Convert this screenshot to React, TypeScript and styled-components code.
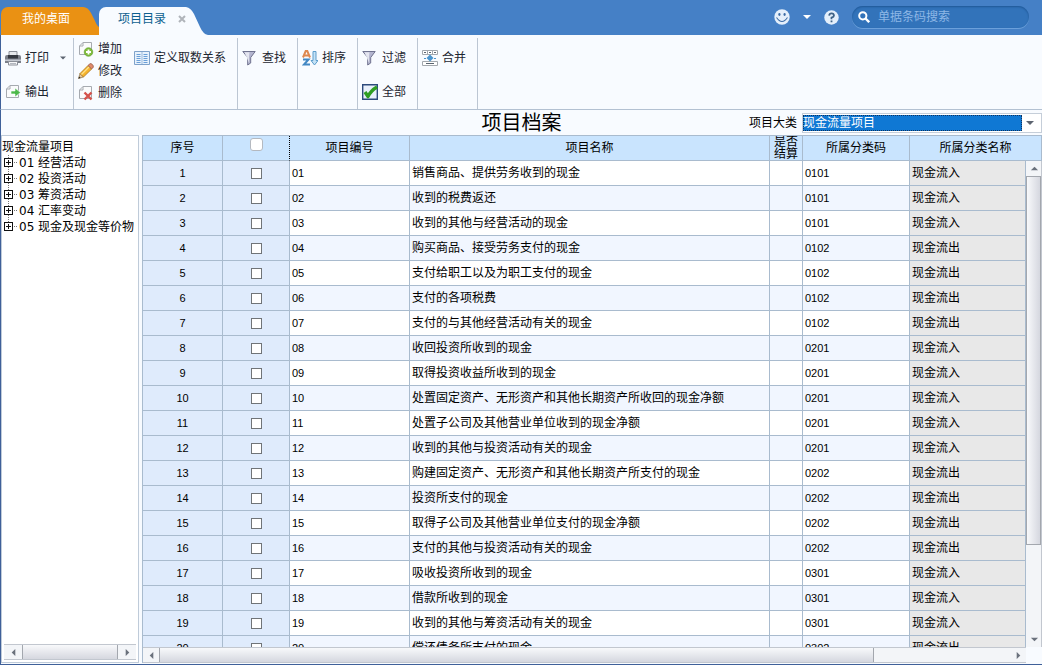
import React from "react";
import styled, { createGlobalStyle } from "styled-components";

const line = "#a9bbce";
const frame = "#3f6099";

const GlobalStyle = createGlobalStyle`
  *, *::before, *::after { box-sizing: border-box; }
  body {
    margin: 0;
    overflow: hidden;
    font-family: "Liberation Sans", "Noto Sans CJK SC", sans-serif;
    font-size: 12px;
    line-height: 16px;
    color: #000;
  }
  button, input, select { font: inherit; color: inherit; margin: 0; padding: 0; }
  button { border: 0; background: none; cursor: pointer; }
`;

const Page = styled.div`
  display: flex;
  flex-direction: column;
  height: 100vh;
  background: #f8fbff;
`;

/* ---------- top bar ---------- */

const TopBar = styled.header`
  display: flex;
  justify-content: space-between;
  height: 35px;
  flex: none;
  padding: 0 13px 0 1px;
  background: #4580c6;
`;

const Tabs = styled.nav`
  display: flex;
  align-items: flex-end;
`;

const Tab = styled.div<{ $active?: boolean }>`
  display: flex;
  height: 28px;
  color: ${(p) => (p.$active ? "#0d5f8f" : "#fff")};
  svg { display: block; fill: ${(p) => (p.$active ? "#f8fbff" : "#ea9113")}; }
`;

const TabFace = styled.div<{ $active?: boolean }>`
  display: flex;
  align-items: center;
  gap: 12px;
  padding-left: ${(p) => (p.$active ? "19px" : "21px")};
  padding-bottom: 4px;
  border-top-left-radius: 7px;
  background: ${(p) => (p.$active ? "#f8fbff" : "#ea9113")};
`;

const CloseButton = styled.button`
  display: flex;
  svg { fill: none; stroke: #b0b4ba; stroke-width: 2; }
`;

const TopTools = styled.div`
  display: flex;
  align-items: center;
  gap: 13px;
  padding-bottom: 1px;
`;

const IconButton = styled.button`
  display: flex;
`;

const SearchBox = styled.label`
  display: flex;
  align-items: center;
  gap: 8px;
  width: 177px;
  height: 22px;
  padding: 0 12px 0 6px;
  border-radius: 11px;
  background: #3273ba;
  box-shadow: inset 0 1px 2px #1f5796, 0 1px 0 #6ba0db;
  input {
    flex: 1;
    min-width: 0;
    border: 0;
    outline: 0;
    background: none;
    color: #fff;
  }
  input::placeholder { color: #8db7e6; opacity: 1; }
`;

/* ---------- ribbon ---------- */

const Ribbon = styled.div`
  display: flex;
  flex: none;
  height: 75px;
  border-left: 1px solid ${frame};
  border-bottom: 1px solid #b3c1d2;
`;

const Group = styled.div<{ $width: number }>`
  display: flex;
  gap: 12px;
  width: ${(p) => p.$width}px;
  margin-top: 3px;
  padding-left: 4px;
  border-right: 1px solid #bcc6d3;
`;

const Stack = styled.div<{ $dense?: boolean }>`
  display: flex;
  flex-direction: column;
  gap: ${(p) => (p.$dense ? "0" : "12px")};
  margin-top: ${(p) => (p.$dense ? "0" : "9px")};
`;

const Tool = styled.button`
  display: flex;
  align-items: center;
  gap: 4px;
  height: 22px;
  white-space: nowrap;
  color: #1c2530;
  svg { flex: none; }
`;

const DropTool = styled.div`
  display: flex;
  align-items: center;
  gap: 11px;
`;

/* ---------- title ---------- */

const TitleRow = styled.div`
  display: grid;
  grid-template-columns: 1fr auto 1fr;
  align-items: center;
  flex: none;
  height: 25px;
  border-left: 1px solid ${frame};
`;

const Title = styled.h1`
  grid-column: 2;
  margin: 0;
  font-size: 20px;
  font-weight: 400;
  line-height: 24px;
`;

const Category = styled.div`
  display: flex;
  justify-content: flex-end;
  align-items: center;
  gap: 5px;
`;

const SelectBox = styled.div`
  display: flex;
  align-items: center;
  width: 240px;
  height: 20px;
  padding: 1px 7px 1px 0;
  border: 1px solid #c5ced9;
  background: #fff;
  gap: 4px;
  select {
    flex: 1;
    min-width: 0;
    height: 16px;
    appearance: none;
    border: 0;
    border-radius: 0;
    background: #0f78d4;
    color: #fff;
    line-height: 16px;
    outline: 1px dotted #10335f;
    outline-offset: -1px;
  }
`;

/* ---------- workspace ---------- */

const Workspace = styled.main`
  display: flex;
  gap: 3px;
  flex: 1;
  min-height: 0;
  border-left: 1px solid ${frame};
  border-bottom: 1px solid ${frame};
`;

const TreePanel = styled.aside`
  display: flex;
  flex-direction: column;
  width: 138px;
  flex: none;
  margin-bottom: 1px;
  padding-bottom: 2px;
  border: 1px solid #bfcbd9;
  background: #fff;
`;

const TreeBody = styled.div`
  flex: 1;
  min-height: 0;
  overflow: hidden;
  padding-top: 3px;
`;

const TreeList = styled.ul`
  list-style: none;
  margin: 0;
  padding: 0 0 0 2px;
  font-family: "DejaVu Sans", "Noto Sans CJK SC", sans-serif;
`;

const TreeNode = styled.li`
  display: flex;
  align-items: center;
  gap: 1px;
  height: 16px;
  white-space: nowrap;
`;

const Toggle = styled.button`
  display: flex;
`;

const GridPanel = styled.section`
  position: relative;
  display: flex;
  flex-direction: column;
  flex: 1;
  min-width: 0;
  margin-bottom: 1px;
  border-left: 1px solid ${line};
  border-top: 1px solid ${line};
`;

const GridBody = styled.div`
  flex: 1;
  min-height: 0;
  overflow: hidden;
  background: #fff;
`;

const Table = styled.table`
  width: 100%;
  table-layout: fixed;
  border-collapse: separate;
  border-spacing: 0;
`;

const Head = styled.th<{ $mark?: boolean }>`
  height: 25px;
  padding: ${(p) => (p.$mark ? "2px 0 0" : "0")};
  vertical-align: ${(p) => (p.$mark ? "top" : "middle")};
  border-right: 1px ${(p) => (p.$mark ? "dotted #000" : `solid ${line}`)};
  border-bottom: 1px solid ${line};
  background: #c9e4fe;
  font-weight: 400;
`;

const TightLabel = styled.div`
  height: 24px;
  overflow: hidden;
  line-height: 12px;
`;

const Cell = styled.td<{ $tone?: "key" | "locked"; $center?: boolean; $number?: boolean }>`
  height: 25px;
  padding: 0 2px;
  overflow: hidden;
  white-space: nowrap;
  border-right: 1px solid ${line};
  border-bottom: 1px solid ${line};
  text-align: ${(p) => (p.$center ? "center" : "left")};
  font-size: ${(p) => (p.$number ? "11px" : "12px")};
  ${(p) => p.$tone === "key" && "background: #dfebfc;"}
  ${(p) => p.$tone === "locked" && "background: #e8e8e8;"}
`;

const Row = styled.tr`
  background: #fff;
  &:nth-child(even) { background: #f1f6ff; }
`;

const Check = styled.input<{ $head?: boolean }>`
  display: block;
  appearance: none;
  width: ${(p) => (p.$head ? "13px" : "11px")};
  height: ${(p) => (p.$head ? "13px" : "11px")};
  margin: 0 auto;
  border: 1px solid ${(p) => (p.$head ? "#b4b9c0" : "#707478")};
  border-radius: ${(p) => (p.$head ? "3px" : "0")};
  background: #fff;
  &:checked { background: #4580c6; }
`;

/* ---------- scroll bars ---------- */

const ScrollButton = styled.button`
  display: flex;
  flex: none;
  align-items: center;
  justify-content: center;
  width: 16px;
  height: 15px;
`;

const HBar = styled.div<{ $inset?: boolean }>`
  display: flex;
  flex: none;
  height: 16px;
  margin: ${(p) => (p.$inset ? "0 2px" : "0 16px 0 0")};
  border-top: 1px solid #c2c7cf;
  border-bottom: 1px solid #c2c7cf;
  background: #f3f5f8;
  ${ScrollButton} {
    width: ${(p) => (p.$inset ? "18px" : "16px")};
    height: 14px;
  }
`;

const HTrack = styled.div`
  flex: 1;
  display: flex;
`;

const HThumb = styled.div<{ $size: string }>`
  width: ${(p) => p.$size};
  border: 1px solid #a3a7ae;
  border-width: 0 1px;
  background: linear-gradient(#f8f9fb, #d5d7df);
`;

const VBar = styled.div`
  position: absolute;
  top: 25px;
  right: 0;
  bottom: 16px;
  display: flex;
  flex-direction: column;
  width: 17px;
  border-left: 1px solid ${line};
  border-right: 1px solid #c2c7cf;
  background: #f3f5f8;
`;

const VTrack = styled.div`
  flex: 1;
`;

const VThumb = styled.div`
  height: 81%;
  border: 1px solid #a3a7ae;
  background: linear-gradient(90deg, #f8f9fb, #d5d7df);
`;

/* ---------- drawings ---------- */

const Caret = ({ color = "#5c6470", size = 7 }: { color?: string; size?: number }) => (
  <svg width={size} height="4" viewBox="0 0 8 4" aria-hidden="true">
    <path d="M0 0h8L4 4z" fill={color} />
  </svg>
);

const arrows = {
  left: "M7 1v8L3 5z",
  right: "M3 1v8l4-4z",
  up: "M1 7h8L5 3z",
  down: "M1 3h8L5 7z",
};

const Arrow = ({ to }: { to: keyof typeof arrows }) => (
  <svg width="9" height="9" viewBox="0 0 10 10" aria-hidden="true">
    <path d={arrows[to]} fill="#6a717c" />
  </svg>
);

const Icon = ({ children }: { children: React.ReactNode }) => (
  <svg width="16" height="16" viewBox="0 0 16 16" aria-hidden="true">{children}</svg>
);

const PrinterIcon = () => (
  <Icon>
    <path d="M4 1.500h8v6H4z" fill="#e6e8ec" stroke="#8b8f98" />
    <path d="M0 7Q0 5 2 5h12q2 0 2 2v6H0z" fill="#7b7f89" />
    <path d="M3 5h10v3.500H3z" fill="#343840" />
    <path d="M0 9.500h16V11H0z" fill="#c4c8d0" />
    <path d="M3.500 11.500h9v3.500h-9z" fill="#f7f7f9" stroke="#8b8f98" />
    <path d="M5 13.500h6" stroke="#b4b8c0" />
  </Icon>
);

const Sheet = () => (
  <path d="M5 1.500h8.500v12h-12V5z M5 1.500V5H1.500" fill="#fafbfc" stroke="#a6aab0" strokeLinejoin="round" />
);

const ExportIcon = () => (
  <Icon>
    <Sheet />
    <path d="M6 7h4V4l5.500 4.500L10 13v-3H6z" fill="#4cb84a" stroke="#fff" strokeWidth=".6" />
  </Icon>
);

const AddIcon = () => (
  <Icon>
    <Sheet />
    <circle cx="10.500" cy="11" r="4.300" fill="#7fbc3c" stroke="#5c9a28" strokeWidth=".6" />
    <path d="M10.500 8.500v5M8 11h5" stroke="#fff" strokeWidth="1.800" />
  </Icon>
);

const DeleteIcon = () => (
  <Icon>
    <Sheet />
    <path d="M6.500 7.500l7 7M13.500 7.500l-7 7" stroke="#d4524c" strokeWidth="2.400" />
  </Icon>
);

const PencilIcon = () => (
  <Icon>
    <path d="M.5 15.500l1.500-5 3.500 3.500z" fill="#e8c99a" stroke="#7a6030" strokeWidth=".6" />
    <path d="M.5 15.500l.6-2 1.500 1.400z" fill="#222" />
    <path d="M2 10.500l8-8 3.700 3.500-8.200 8z" fill="#f5b32c" stroke="#a26a14" strokeWidth=".7" />
    <path d="M3.500 11.500l8-8" stroke="#fde08a" strokeWidth="1.200" />
    <path d="M10 2.500L11.700.8q1.200-.8 2.700.7t.8 2.800L13.700 6z" fill="#e08a6c" stroke="#8d5340" strokeWidth=".7" />
  </Icon>
);

const BookIcon = () => (
  <Icon>
    <path d="M.5 1.500h15v13H.5z" fill="#e8f2fc" stroke="#7fa2ca" />
    <path d="M8 2v12" stroke="#9dbbdc" />
    <path d="M2.500 4.500h4M2.500 6.500h4M2.500 8.500h4M2.500 10.500h4M2.500 12.500h4M9.500 4.500h4M9.500 6.500h4M9.500 8.500h4M9.500 10.500h4M9.500 12.500h4" stroke="#6a9fd8" />
  </Icon>
);

const FunnelIcon = () => (
  <Icon>
    <path d="M.8 1.500h12.400L8.700 7.500V13l-3 2V7.500z" fill="#b3b5cf" stroke="#70738f" />
    <path d="M2.500 2.300h5L7 7v6" fill="#f0f1f8" opacity=".8" />
  </Icon>
);

const SortIcon = () => (
  <Icon>
    <path d="M1 7.500L3.700 1h1.600L8 7.500M2.500 5.500h4.500" fill="none" stroke="#dd8850" strokeWidth="2" />
    <path d="M1 9.500h5.500L2 14.500h6" fill="none" stroke="#4388c4" strokeWidth="2" />
    <path d="M11 1.500h3v9h2l-3.500 4.500L9 10.500h2z" fill="#c5e2f6" stroke="#5c9dcc" />
  </Icon>
);

const AllIcon = () => (
  <Icon>
    <path d="M.7.700h14.600v14.600H.7z" fill="#e9f0fb" stroke="#2d4a7c" strokeWidth="1.400" />
    <path d="M3 8l3 4.500Q9 6.500 15 3" fill="none" stroke="#2f9e22" strokeWidth="3.400" strokeLinejoin="round" />
  </Icon>
);

const MergeIcon = () => (
  <Icon>
    <path d="M.5 .5h15v4H.5zM5.500 .5v4M10.500 .5v4M.5 11.500h15v4H.5z" fill="#fff" stroke="#a3a8ae" />
    <path d="M2 2.500h2M7 2.500h2M12 2.500h2M4 13.500h8" stroke="#5b646f" />
    <path d="M8 4.500l3.500 3.500L8 11.500 4.500 8z" fill="#4b94cd" />
    <path d="M2 8.500h2M12 8.500h2" stroke="#4b94cd" />
  </Icon>
);

const SmileIcon = () => (
  <Icon>
    <circle cx="8" cy="8" r="7.700" fill="#e4effb" />
    <ellipse cx="5.400" cy="5.500" rx="1.100" ry="1.400" fill="#3b6ba5" />
    <ellipse cx="10.600" cy="5.500" rx="1.100" ry="1.400" fill="#3b6ba5" />
    <path d="M2.500 8.500q5.500 8 11 0" fill="none" stroke="#3b6ba5" strokeWidth="1.100" />
  </Icon>
);

const HelpIcon = () => (
  <svg width="15" height="15" viewBox="0 0 16 16" aria-hidden="true">
    <circle cx="8" cy="8" r="7.700" fill="#e4effb" />
    <path d="M5.500 6q.2-2.400 2.600-2.400T10.600 6Q10.500 7.500 8 8.200v1.600M8 11.200v1.800" fill="none" stroke="#3f6286" strokeWidth="1.900" />
  </svg>
);

const SearchIcon = () => (
  <svg width="12" height="12" viewBox="0 0 12 12" aria-hidden="true">
    <circle cx="4.800" cy="4.800" r="3.600" fill="none" stroke="#fff" strokeWidth="2" />
    <path d="M7.500 7.500l3.700 3.700" stroke="#fff" strokeWidth="2.400" />
  </svg>
);

const Branch = ({ last }: { last: boolean }) => (
  <svg width="14" height="16" viewBox="0 0 14 16" aria-hidden="true" shapeRendering="crispEdges">
    <path d={last ? "M4.500 0v4" : "M4.500 0v16"} stroke="#777" strokeDasharray="1 1" />
    <path d="M10 7.500h4" stroke="#777" strokeDasharray="1 1" />
    <path d="M.5 3.500h8v8h-8z" fill="#fff" stroke="#111" />
    <path d="M2 7.500h5M4.500 5v5" stroke="#111" />
  </svg>
);

/* ---------- data ---------- */

const tree = ["01 经营活动", "02 投资活动", "03 筹资活动", "04 汇率变动", "05 现金及现金等价物"];

const IN = "现金流入";
const OUT = "现金流出";

const items: [string, string, string][] = [
  ["销售商品、提供劳务收到的现金", "0101", IN],
  ["收到的税费返还", "0101", IN],
  ["收到的其他与经营活动的现金", "0101", IN],
  ["购买商品、接受劳务支付的现金", "0102", OUT],
  ["支付给职工以及为职工支付的现金", "0102", OUT],
  ["支付的各项税费", "0102", OUT],
  ["支付的与其他经营活动有关的现金", "0102", OUT],
  ["收回投资所收到的现金", "0201", IN],
  ["取得投资收益所收到的现金", "0201", IN],
  ["处置固定资产、无形资产和其他长期资产所收回的现金净额", "0201", IN],
  ["处置子公司及其他营业单位收到的现金净额", "0201", IN],
  ["收到的其他与投资活动有关的现金", "0201", IN],
  ["购建固定资产、无形资产和其他长期资产所支付的现金", "0202", OUT],
  ["投资所支付的现金", "0202", OUT],
  ["取得子公司及其他营业单位支付的现金净额", "0202", OUT],
  ["支付的其他与投资活动有关的现金", "0202", OUT],
  ["吸收投资所收到的现金", "0301", IN],
  ["借款所收到的现金", "0301", IN],
  ["收到的其他与筹资活动有关的现金", "0301", IN],
  ["偿还债务所支付的现金", "0302", OUT],
];

export default function App() {
  return (
    <Page>
      <GlobalStyle />
      <TopBar>
        <Tabs>
          <Tab>
            <TabFace>
              <button type="button">我的桌面</button>
            </TabFace>
            <svg width="29" height="28" viewBox="0 0 29 28" aria-hidden="true">
              <path d="M0 0h13q5 0 8 6l4 8q2 5 4 6v8H0z" />
            </svg>
          </Tab>
          <Tab $active>
            <TabFace $active>
              <button type="button">项目目录</button>
              <CloseButton type="button" aria-label="关闭">
                <svg width="8" height="8" viewBox="0 0 8 8"><path d="M1 1l6 6M7 1L1 7" /></svg>
              </CloseButton>
            </TabFace>
            <svg width="22" height="28" viewBox="0 0 22 28" aria-hidden="true">
              <path d="M0 0q5 1 8 7l6 13q3 7 8 8H0z" />
            </svg>
          </Tab>
        </Tabs>
        <TopTools>
          <IconButton type="button" aria-label="表情"><SmileIcon /></IconButton>
          <IconButton type="button" aria-label="更多"><Caret color="#fff" size={8} /></IconButton>
          <IconButton type="button" aria-label="帮助"><HelpIcon /></IconButton>
          <SearchBox>
            <SearchIcon />
            <input type="text" aria-label="搜索" placeholder="单据条码搜索" />
          </SearchBox>
        </TopTools>
      </TopBar>

      <Ribbon>
        <Group $width={73}>
          <Stack>
            <DropTool>
              <Tool type="button"><PrinterIcon />打印</Tool>
              <IconButton type="button" aria-label="打印选项"><Caret size={6} /></IconButton>
            </DropTool>
            <Tool type="button"><ExportIcon />输出</Tool>
          </Stack>
        </Group>
        <Group $width={164}>
          <Stack $dense>
            <Tool type="button"><AddIcon />增加</Tool>
            <Tool type="button"><PencilIcon />修改</Tool>
            <Tool type="button"><DeleteIcon />删除</Tool>
          </Stack>
          <Stack>
            <Tool type="button"><BookIcon />定义取数关系</Tool>
          </Stack>
        </Group>
        <Group $width={60}>
          <Stack><Tool type="button"><FunnelIcon />查找</Tool></Stack>
        </Group>
        <Group $width={60}>
          <Stack><Tool type="button"><SortIcon />排序</Tool></Stack>
        </Group>
        <Group $width={60}>
          <Stack>
            <Tool type="button"><FunnelIcon />过滤</Tool>
            <Tool type="button"><AllIcon />全部</Tool>
          </Stack>
        </Group>
        <Group $width={60}>
          <Stack><Tool type="button"><MergeIcon />合并</Tool></Stack>
        </Group>
      </Ribbon>

      <TitleRow>
        <Title>项目档案</Title>
        <Category>
          <label htmlFor="category">项目大类</label>
          <SelectBox>
            <select id="category" defaultValue="cash">
              <option value="cash">现金流量项目</option>
            </select>
            <Caret size={8} />
          </SelectBox>
        </Category>
      </TitleRow>

      <Workspace>
        <TreePanel>
          <TreeBody>
            <div>现金流量项目</div>
            <TreeList>
              {tree.map((name, i) => (
                <TreeNode key={name}>
                  <Toggle type="button" aria-label="展开"><Branch last={i === tree.length - 1} /></Toggle>
                  {name}
                </TreeNode>
              ))}
            </TreeList>
          </TreeBody>
          <HBar $inset>
            <ScrollButton type="button" aria-label="向左滚动"><Arrow to="left" /></ScrollButton>
            <HTrack><HThumb $size="100%" /></HTrack>
            <ScrollButton type="button" aria-label="向右滚动"><Arrow to="right" /></ScrollButton>
          </HBar>
        </TreePanel>

        <GridPanel>
          <GridBody>
            <Table>
              <colgroup>
                <col width="80" />
                <col width="67" />
                <col width="120" />
                <col />
                <col width="33" />
                <col width="107" />
                <col width="132" />
              </colgroup>
              <thead>
                <tr>
                  <Head>序号</Head>
                  <Head $mark><Check $head type="checkbox" aria-label="全选" /></Head>
                  <Head>项目编号</Head>
                  <Head>项目名称</Head>
                  <Head><TightLabel>是否<br />结算</TightLabel></Head>
                  <Head>所属分类码</Head>
                  <Head>所属分类名称</Head>
                </tr>
              </thead>
              <tbody>
                {items.map(([name, code, kind], i) => (
                  <Row key={name}>
                    <Cell $tone="key" $center $number>{i + 1}</Cell>
                    <Cell $tone="key"><Check type="checkbox" aria-label={name} /></Cell>
                    <Cell $number>{String(i + 1).padStart(2, "0")}</Cell>
                    <Cell>{name}</Cell>
                    <Cell />
                    <Cell $number>{code}</Cell>
                    <Cell $tone="locked">{kind}</Cell>
                  </Row>
                ))}
              </tbody>
            </Table>
          </GridBody>
          <VBar>
            <ScrollButton type="button" aria-label="向上滚动"><Arrow to="up" /></ScrollButton>
            <VTrack><VThumb /></VTrack>
            <ScrollButton type="button" aria-label="向下滚动"><Arrow to="down" /></ScrollButton>
          </VBar>
          <HBar>
            <ScrollButton type="button" aria-label="向左滚动"><Arrow to="left" /></ScrollButton>
            <HTrack><HThumb $size="84%" /></HTrack>
            <ScrollButton type="button" aria-label="向右滚动"><Arrow to="right" /></ScrollButton>
          </HBar>
        </GridPanel>
      </Workspace>
    </Page>
  );
}
